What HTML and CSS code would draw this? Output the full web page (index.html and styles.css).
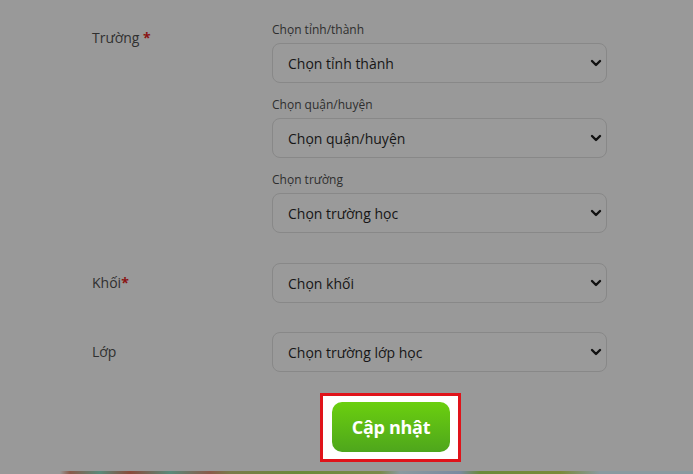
FILE: index.html
```html
<!DOCTYPE html>
<html lang="vi">
<head>
<meta charset="utf-8">
<link rel="stylesheet" href="styles.css">
</head>
<body>
<div class="page">
  <form class="form">
    <div class="row row-school">
      <div class="label">Trường <span class="req">*</span></div>
      <div class="controls">
        <div class="block">
          <div class="sublabel">Chọn tỉnh/thành</div>
          <div class="select-wrap">
            <select class="select"><option>Chọn tỉnh thành</option></select>
            <svg class="chev" width="12" height="8" viewBox="0 0 12 8"><path d="M2 2 L6 6 L10 2" fill="none" stroke="#111" stroke-width="2.4" stroke-linecap="round" stroke-linejoin="round"/></svg>
          </div>
        </div>
        <div class="block">
          <div class="sublabel">Chọn quận/huyện</div>
          <div class="select-wrap">
            <select class="select"><option>Chọn quận/huyện</option></select>
            <svg class="chev" width="12" height="8" viewBox="0 0 12 8"><path d="M2 2 L6 6 L10 2" fill="none" stroke="#111" stroke-width="2.4" stroke-linecap="round" stroke-linejoin="round"/></svg>
          </div>
        </div>
        <div class="block">
          <div class="sublabel">Chọn trường</div>
          <div class="select-wrap">
            <select class="select"><option>Chọn trường học</option></select>
            <svg class="chev" width="12" height="8" viewBox="0 0 12 8"><path d="M2 2 L6 6 L10 2" fill="none" stroke="#111" stroke-width="2.4" stroke-linecap="round" stroke-linejoin="round"/></svg>
          </div>
        </div>
      </div>
    </div>
    <div class="row row-center">
      <div class="label">Khối<span class="req">*</span></div>
      <div class="controls">
        <div class="select-wrap">
          <select class="select"><option>Chọn khối</option></select>
          <svg class="chev" width="12" height="8" viewBox="0 0 12 8"><path d="M2 2 L6 6 L10 2" fill="none" stroke="#111" stroke-width="2.4" stroke-linecap="round" stroke-linejoin="round"/></svg>
        </div>
      </div>
    </div>
    <div class="row row-center">
      <div class="label">Lớp</div>
      <div class="controls">
        <div class="select-wrap">
          <select class="select"><option>Chọn trường lớp học</option></select>
          <svg class="chev" width="12" height="8" viewBox="0 0 12 8"><path d="M2 2 L6 6 L10 2" fill="none" stroke="#111" stroke-width="2.4" stroke-linecap="round" stroke-linejoin="round"/></svg>
        </div>
      </div>
    </div>
    <div class="actions">
      <div class="highlight">
        <button type="button" class="btn">Cập nhật</button>
      </div>
    </div>
  </form>
  <div class="strip"></div>
</div>
</body>
</html>
```
FILE: styles.css
```css
* { box-sizing: border-box; }
html, body {
  margin: 0;
  padding: 0;
  height: 474px;
  overflow: hidden;
  background: #999999;
  font-family: "Open Sans", "Noto Sans", sans-serif;
}
.page {
  display: flex;
  flex-direction: column;
  height: 474px;
}
.form {
  flex: 1;
  padding: 21px 0 0 92px;
  display: flex;
  flex-direction: column;
}
.row {
  display: grid;
  grid-template-columns: 180px 335px;
}
.row-school { margin-bottom: 30px; }
.row-center { align-items: center; margin-bottom: 29px; }
.row-center + .row-center { margin-bottom: 21px; }
.label {
  font-size: 14px;
  line-height: 22px;
  color: #303030;
}
.row-school .label { padding-top: 6px; }
.req { color: #8a1414; font-weight: 700; }
.controls {
  display: flex;
  flex-direction: column;
  gap: 13px;
}
.block {
  display: flex;
  flex-direction: column;
  gap: 4px;
}
.sublabel {
  font-size: 12px;
  line-height: 18px;
  color: #2e2e2e;
}
.select-wrap {
  position: relative;
  height: 40px;
}
.select {
  appearance: none;
  -webkit-appearance: none;
  width: 100%;
  height: 40px;
  border: 1px solid #888888;
  border-radius: 8px;
  background: #9a9a9a;
  padding: 0 30px 0 15px;
  font-family: "Open Sans", "Noto Sans", sans-serif;
  font-size: 14px;
  color: #161616;
  outline: none;
}
.chev {
  position: absolute;
  right: 5px;
  top: 16px;
}
.actions {
  display: flex;
  padding-left: 228px;
}
.highlight {
  border: 3px solid #e0131a;
  background: #ffffff;
  padding: 6px 8px 7px 9px;
}
.btn {
  width: 118px;
  height: 50px;
  border: none;
  border-radius: 10px;
  background: linear-gradient(#6bcf0f, #4ea61c);
  color: #ffffff;
  font-family: "Open Sans", "Noto Sans", sans-serif;
  font-weight: 700;
  font-size: 18px;
  letter-spacing: -0.3px;
  padding: 0;
}
.strip {
  height: 3px;
  background: linear-gradient(90deg, #999 0, #999 60px, #8a5a4a 70px, #5a8a7a 100px, #8a4a3a 130px, #5a8a7a 170px, #8a5a4a 210px, #7a7a4a 230px, #6a8a3a 300px, #7a8a4a 380px, #8a9aa0 400px, #7a8aa0 460px, #6a8a3a 480px, #7a8a3a 560px, #8a9aa0 600px, #8a9aa0 693px);
}
```
